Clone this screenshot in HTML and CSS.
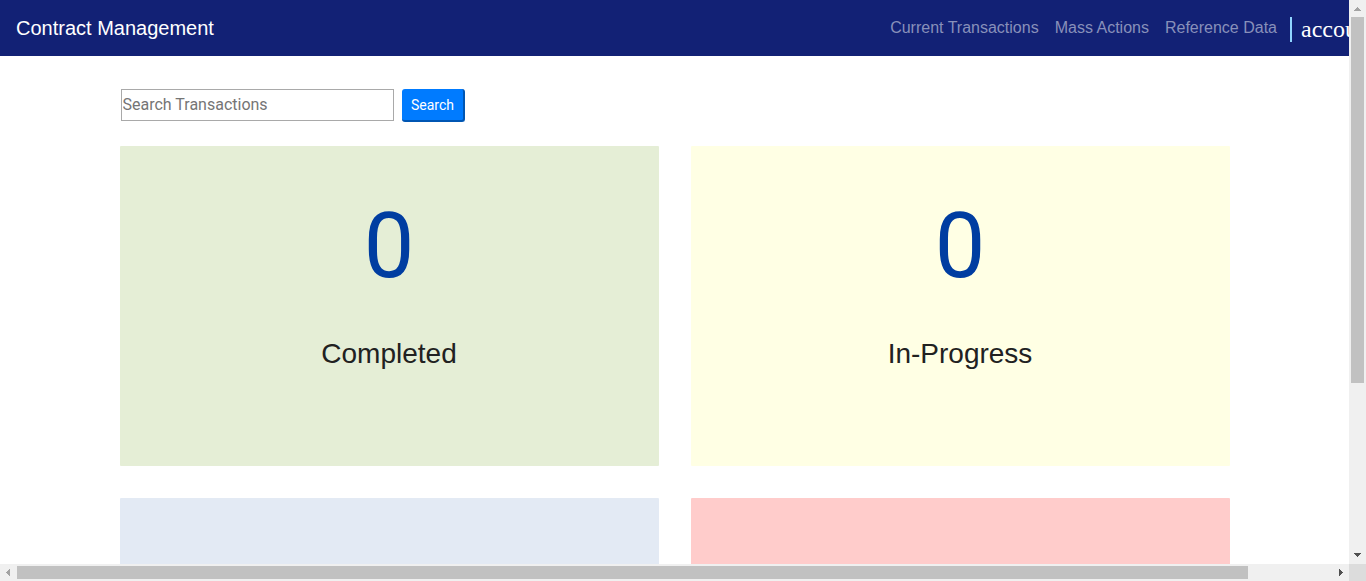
FILE: index.html
```html
<!DOCTYPE html>
<html lang="en">
<head>
<meta charset="utf-8">
<title>Contract Management</title>
<link rel="stylesheet" href="styles.css">
</head>
<body>
<div class="frame">
  <div class="viewport">
    <header class="navbar">
      <a class="brand" href="#">Contract Management</a>
      <nav class="nav">
        <a class="nav-link" href="#">Current Transactions</a>
        <a class="nav-link" href="#">Mass Actions</a>
        <a class="nav-link" href="#">Reference Data</a>
      </nav>
      <a class="account" href="#">account_circle</a>
    </header>
    <main class="container">
      <form class="search">
        <input class="search-input" type="text" placeholder="Search Transactions" aria-label="Search Transactions">
        <button class="search-button" type="button">Search</button>
      </form>
      <div class="cards">
        <section class="card completed"><div class="count">0</div><h2 class="label">Completed</h2></section>
        <section class="card progress"><div class="count">0</div><h2 class="label">In-Progress</h2></section>
        <section class="card blue"></section>
        <section class="card red"></section>
      </div>
    </main>
  </div>
  <div class="scroll vertical" aria-hidden="true">
    <svg class="arrow" viewBox="0 0 17 17" shape-rendering="crispEdges"><path fill="#a3a3a3" d="M8 7h1v1h1v1h1v1h1v1H5v-1h1V9h1V8h1z"/></svg>
    <div class="track"><div class="thumb"></div></div>
    <svg class="arrow" viewBox="0 0 17 17" shape-rendering="crispEdges"><path fill="#505050" d="M5 6h7v1h-1v1h-1v1H9v1H8V9H7V8H6V7H5z"/></svg>
  </div>
  <div class="scroll horizontal" aria-hidden="true">
    <svg class="arrow" viewBox="0 0 17 17" shape-rendering="crispEdges"><path fill="#a3a3a3" d="M10 5v7H9v-1H8v-1H7V9H6V8h1V7h1V6h1V5z"/></svg>
    <div class="track"><div class="thumb"></div></div>
    <svg class="arrow" viewBox="0 0 17 17" shape-rendering="crispEdges"><path fill="#505050" d="M7 5h1v1h1v1h1v1h1v1h-1v1H9v1H8v1H7z"/></svg>
  </div>
  <div class="corner"></div>
</div>
</body>
</html>
```

FILE: styles.css
```css
* {
  box-sizing: border-box;
}

body {
  margin: 0;
  background: #fff;
  color: #212529;
  font: 16px/24px "Liberation Sans", Arial, sans-serif;
}

a {
  text-decoration: none;
}

.frame {
  display: grid;
  grid-template: minmax(0, 1fr) 17px / minmax(0, 1fr) 17px;
  height: 100vh;
}

.viewport {
  overflow: hidden;
}

.navbar {
  display: flex;
  align-items: center;
  height: 56px;
  padding-left: 16px;
  background: #122175;
}

.brand {
  margin-right: auto;
  color: #fff;
  font-size: 20px;
  line-height: 30px;
}

.nav {
  display: flex;
  gap: 16px;
  padding-right: 13px;
}

.nav-link {
  color: #8890ba;
  white-space: nowrap;
}

.account {
  flex: 0 0 59px;
  height: 25px;
  margin-top: 2px;
  padding-left: 9px;
  overflow: hidden;
  border-left: 2px solid #90d5ff;
  color: #fff;
  font: 24px/25px "Liberation Serif", "Times New Roman", serif;
}

.container {
  max-width: 1140px;
  margin: 0 auto;
  padding: 33px 15px 0;
}

.search {
  display: flex;
  gap: 8px;
  margin: 0 0 24px;
  padding-left: 1px;
}

.search-input {
  width: 273px;
  height: 32px;
  padding: 0 1px 1px;
  border: 1px solid #a9a9a9;
  background: #fff;
  font: 16px/24px Roboto, sans-serif;
}

.search-input::placeholder {
  color: #757575;
  opacity: 1;
}

.search-button {
  width: 63px;
  height: 33px;
  padding: 1px 0 0 1px;
  border: 0 solid #0056b3;
  border-width: 0 2px 2px 0;
  border-radius: 3px;
  background: #007bff;
  color: #fff;
  font: 400 14px/21px Roboto, sans-serif;
}

.cards {
  display: grid;
  grid-template-columns: 1fr 1fr;
  gap: 32px;
}

.card {
  height: 320px;
  padding-top: 34px;
  border-radius: 1px;
  text-align: center;
}

.completed {
  background: #e5eed6;
}

.progress {
  background: #ffffe4;
}

.blue {
  background: #e3eaf4;
}

.red {
  background: #ffcccb;
}

.count {
  color: #003da1;
  font: 90px/134px Roboto, sans-serif;
}

.label {
  margin: 23px 0 0;
  color: #212121;
  font-size: 28px;
  font-weight: 400;
  line-height: 34px;
}

.scroll {
  display: flex;
  background: #f0f0f0;
}

.vertical {
  flex-direction: column;
}

.arrow {
  flex: none;
  width: 17px;
  height: 17px;
}

.track {
  flex: 1;
}

.thumb {
  background: #c1c1c1;
}

.vertical .thumb {
  height: 69%;
  margin: 0 2px;
}

.horizontal .track {
  padding: 2px 0;
}

.horizontal .thumb {
  width: 93.6%;
  height: 100%;
}

.corner {
  background: #dcdcdc;
}
```
